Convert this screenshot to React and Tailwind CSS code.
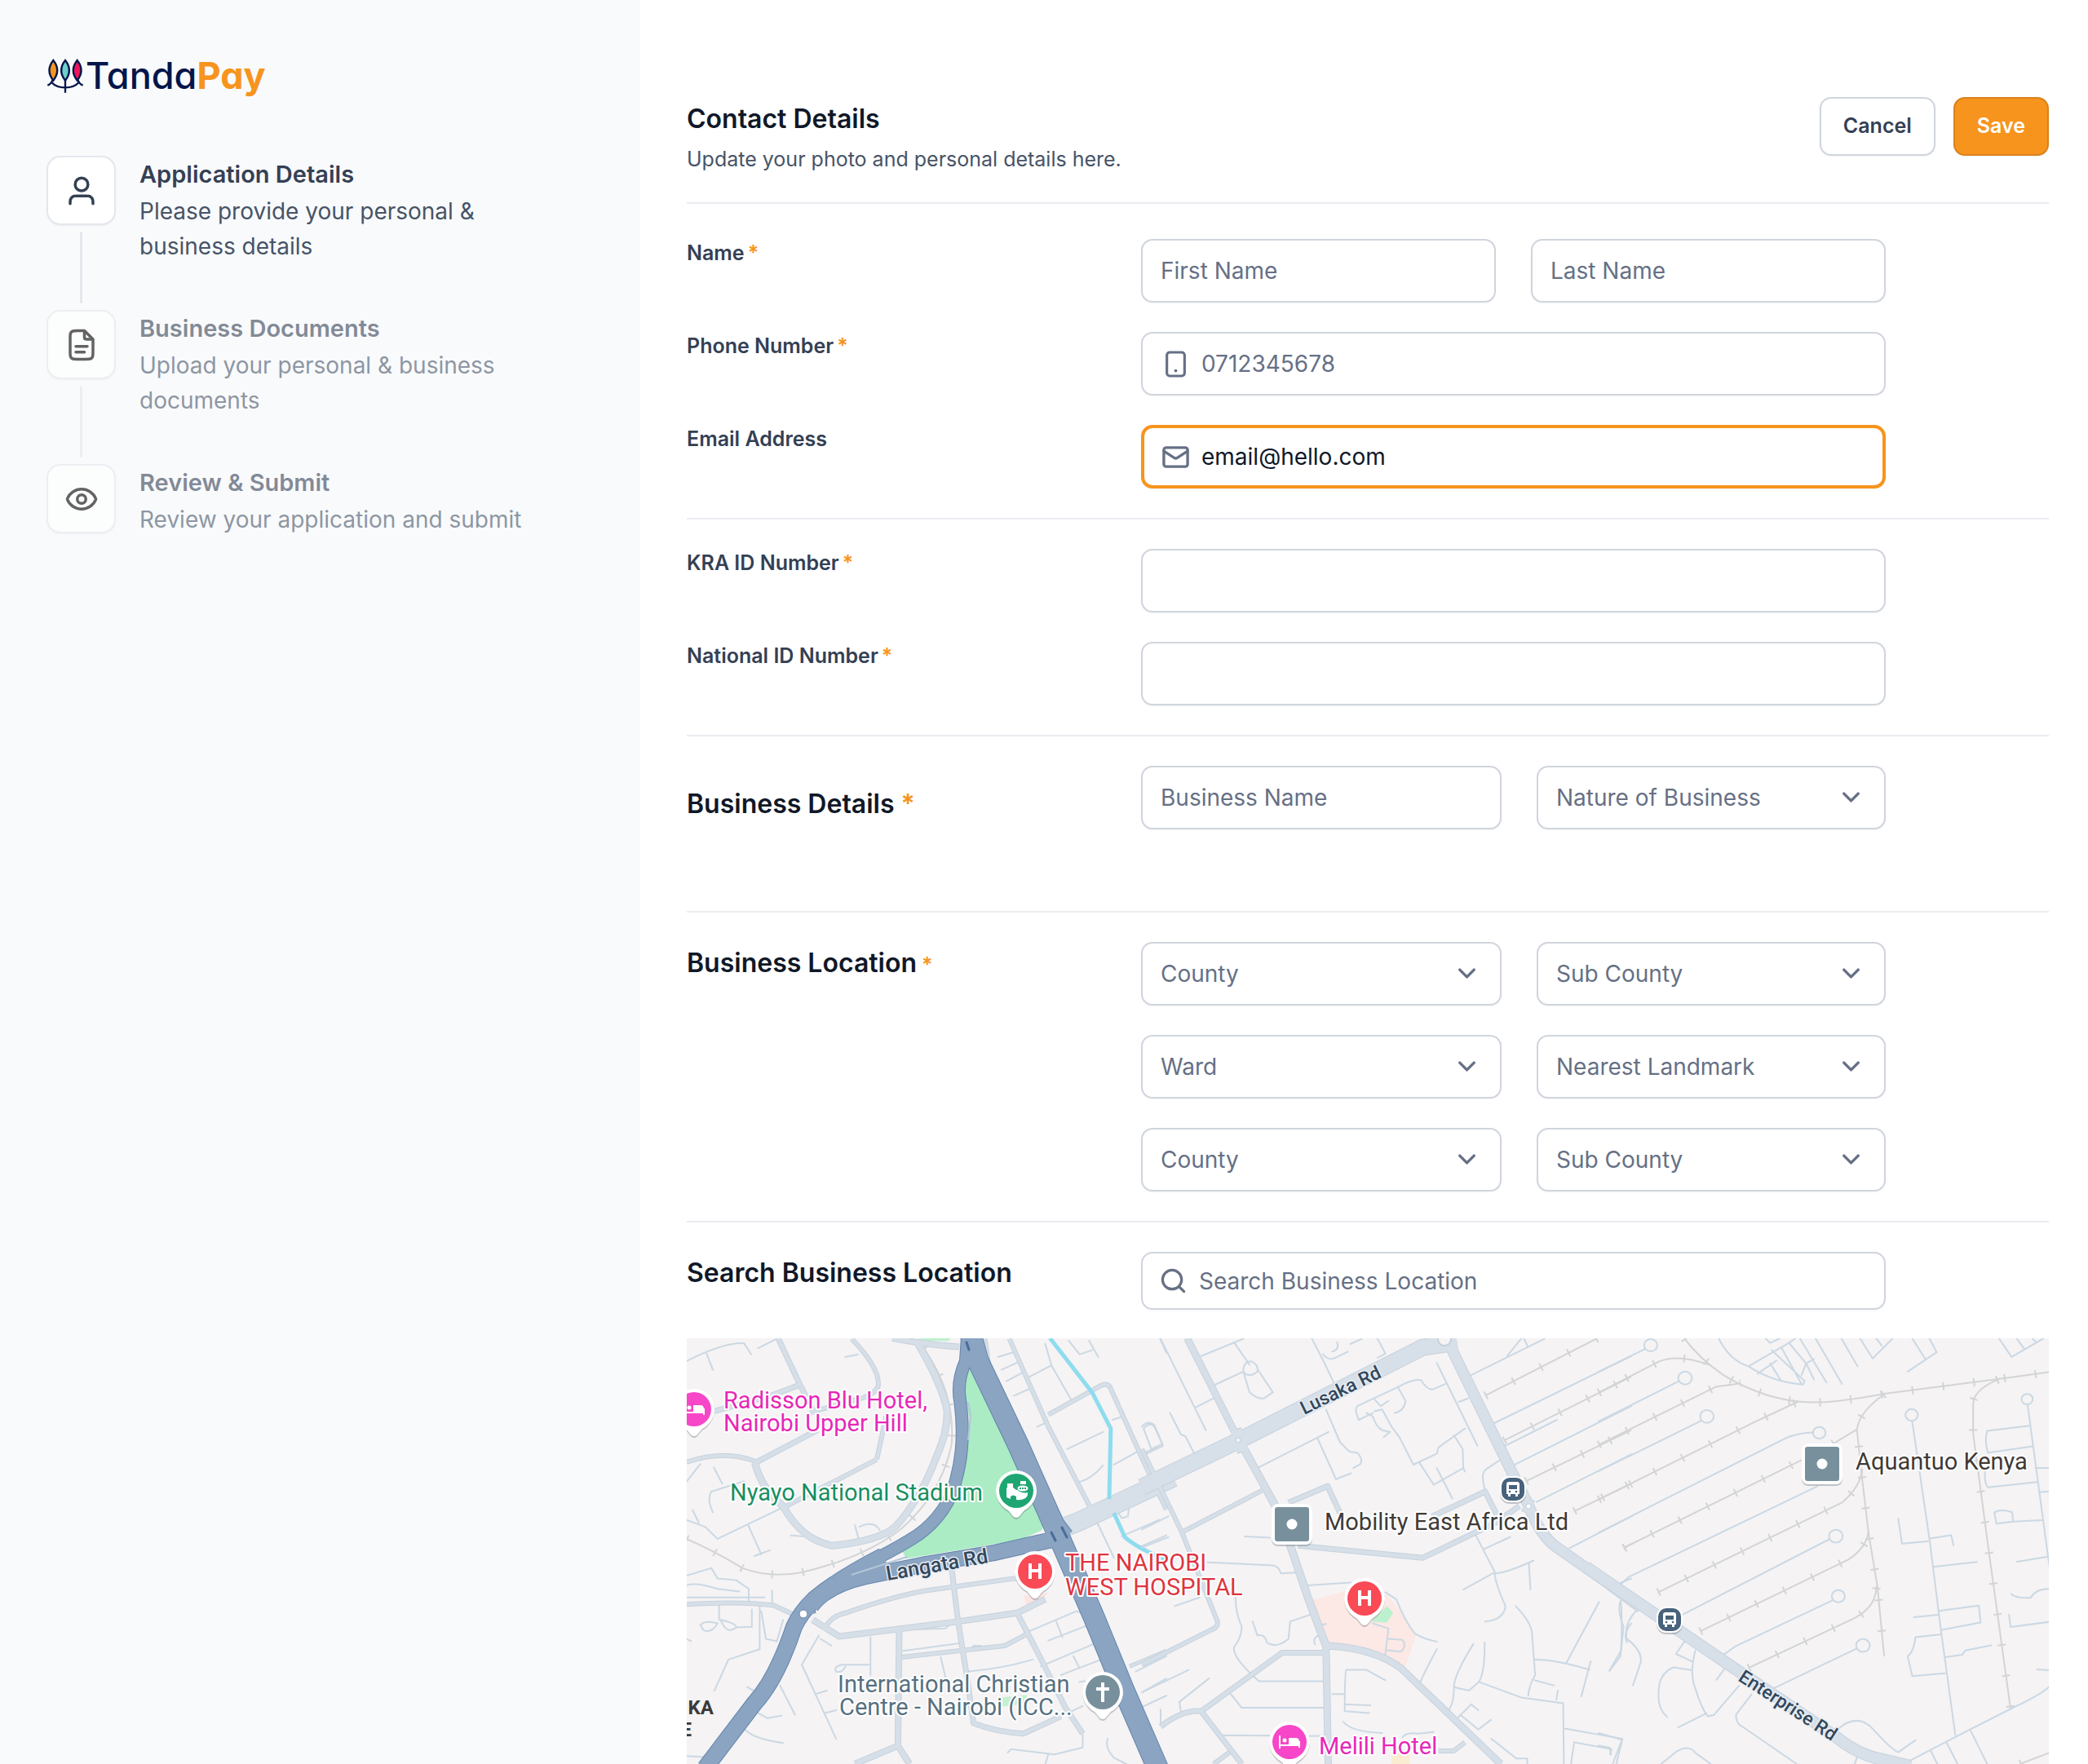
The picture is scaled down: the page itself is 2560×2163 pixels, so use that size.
import React, { useState } from 'react';
import { ChevronDown, Eye, Mail, Search } from 'lucide-react';

const steps = [
  {
    title: 'Application Details',
    text: 'Please provide your personal & business details',
    icon: 'user',
  },
  {
    title: 'Business Documents',
    text: 'Upload your personal & business documents',
    icon: 'file',
  },
  {
    title: 'Review & Submit',
    text: 'Review your application and submit',
    icon: 'eye',
  },
];

const inputClass =
  'h-[78px] w-full min-w-0 rounded-[14px] border-2 border-[#d0d5dd] bg-white px-[22px] text-[28px] text-[#101828] placeholder:text-[#667085] shadow-xs outline-none';

const LogoMark = () => (
  <svg viewBox="50 36 138 126" className="h-[42px] w-[46px]" fill="none" stroke="#02164b" strokeWidth="7">
    <path fill="#f7941d" d="M75 42C56 66 56 92 75 116C94 92 94 66 75 42Z" />
    <path fill="#6fcfce" d="M119 42C100 66 100 92 119 116C138 92 138 66 119 42Z" />
    <path fill="#f0145a" d="M163 42C144 66 144 92 163 116C182 92 182 66 163 42Z" />
    <path d="M54 134Q66 130 72 115M184 134Q172 130 166 115M68 122Q86 142 119 142Q152 142 170 122M119 114V161" />
  </svg>
);

const StepIcon = ({ name }) => {
  if (name === 'eye') return <Eye size={42} strokeWidth={2} />;
  return (
    <svg viewBox="0 0 24 24" className="size-[42px]" fill="none" stroke="currentColor" strokeWidth="2" strokeLinecap="round" strokeLinejoin="round">
      {name === 'user' ? (
        <>
          <circle cx="12" cy="7.5" r="4.5" />
          <path d="M20 21c0-1.4 0-2.1-.17-2.66a4 4 0 0 0-2.67-2.67c-.57-.17-1.26-.17-2.66-.17h-5c-1.4 0-2.1 0-2.66.17a4 4 0 0 0-2.67 2.67C4 18.9 4 19.6 4 21" />
        </>
      ) : (
        <>
          <path d="M14 2.3V6.4c0 .56 0 .84.11 1.05a1 1 0 0 0 .44.44c.21.11.49.11 1.05.11h4.1" />
          <path d="M14 2H8.8c-1.68 0-2.52 0-3.16.33a3 3 0 0 0-1.31 1.31C4 4.28 4 5.12 4 6.8v10.4c0 1.68 0 2.52.33 3.16a3 3 0 0 0 1.31 1.31c.64.33 1.48.33 3.16.33h6.4c1.68 0 2.52 0 3.16-.33a3 3 0 0 0 1.31-1.31c.33-.64.33-1.48.33-3.16V8l-6-6Z" />
          <path d="M16 13H8M14 17H8" />
        </>
      )}
    </svg>
  );
};

const Sidebar = () => (
  <aside className="w-[785px] shrink-0 bg-[#f9fafc] px-[57px] pt-[60px]">
    <div className="flex h-[66px] items-center gap-0.5">
      <LogoMark />
      <span className="text-[45px] font-medium leading-[56px] text-[#02164b] [font-feature-settings:'cv11']">
        Tanda<span className="font-bold text-[#f7941d]">Pay</span>
      </span>
    </div>
    <ol className="mt-[65px]">
      {steps.map((step, index) => (
        <li key={step.title} className={`flex gap-[29px] ${index > 0 ? 'opacity-60' : ''}`}>
          <div className="flex flex-col items-center">
            <div className={`flex size-[85px] items-center justify-center rounded-[17px] border-2 border-[#e4e7ec] bg-white shadow-xs ${index > 0 ? 'text-black' : 'text-[#344054]'}`}>
              <StepIcon name={step.icon} />
            </div>
            {index < steps.length - 1 && (
              <div className="my-2 h-[88px] w-[3px] rounded-sm bg-[#e4e7ec]" />
            )}
          </div>
          <div className="max-w-[490px]">
            <h3 className="text-[29px] font-semibold leading-[45px] text-[#344054]">{step.title}</h3>
            <p className="mt-0.5 text-[28px] leading-[43px] text-[#475467]">{step.text}</p>
          </div>
        </li>
      ))}
    </ol>
  </aside>
);

const Row = ({ label, htmlFor, required, children }) => (
  <div className="flex">
    <div className="w-[557px] shrink-0">
      <label htmlFor={htmlFor} className="text-[25px] font-semibold leading-[35px] text-[#344054]">
        {label}
        {required && <span className="ml-1 text-[#f7941d]">*</span>}
      </label>
    </div>
    <div className="max-w-[913px] flex-1">{children}</div>
  </div>
);

const SelectBox = ({ label }) => (
  <div className="relative">
    <select aria-label={label} className="h-[78px] w-full appearance-none rounded-[14px] border-2 border-[#d0d5dd] bg-white px-[22px] text-[28px] text-[#667085] shadow-xs">
      <option>{label}</option>
    </select>
    <ChevronDown size={35} strokeWidth={2.4} className="pointer-events-none absolute right-[25px] top-[21px] text-[#667085]" />
  </div>
);

/* ---------- map ---------- */

// Each tile keeps its own drawing units, the strokes stay in screen pixels.
const tiles = [
  {
    transform: 'translate(-12 -141) scale(.38265 .42283)',
    areas: [
      ['#abecc4', 'M935 405L1060 640L1175 860L1170 890L1100 918L735 972L718 945L800 890L900 770L932 650L935 560L915 480Z'],
      ['#bdf0ce', 'M775 333H878L870 341H790Z'],
      ['#c4f0d2', 'M1035 1375L1120 1368L1130 1392L1040 1402Z'],
      ['#fce4e1', 'M1112 1080L1190 1070L1165 1095L1118 1108Z'],
    ],
    rails: ['M30 915Q120 950 210 1000Q300 1030 400 1012Q600 970 720 885Q850 780 880 640Q892 500 800 375L775 335'],
    minor: [
      'M30 400Q150 345 215 348L238 380M95 378L115 425M260 362L320 335M540 388L580 380',
      'M75 698L30 750M118 708L145 755M215 748L110 778Q95 800 115 838M50 832L70 868M30 860L90 880L130 915L330 828',
      'M228 875L270 960M248 965L298 948M570 875L585 925M585 880Q630 860 650 890M365 905L410 908',
      'M30 1022L110 1000L130 1030L190 1035L230 1060V1100M30 1085L280 1085M30 1050Q60 1040 130 1060L200 1068M305 1065V1100',
      'M135 1105V1150M75 1165Q90 1150 130 1160Q110 1190 85 1180ZM140 1150Q190 1160 190 1172Q160 1195 140 1150M190 1172L240 1170V1120',
      'M265 1110V1235L165 1265L120 1355M270 1125L285 1205L320 1212L340 1150M225 1345L265 1365',
      'M215 1465Q240 1495 340 1507M250 1415L290 1435L335 1428M330 1340L378 1425M455 1195L400 1280L510 1495M445 1365L480 1355M475 1420L510 1412M460 1205L495 1225',
      'M620 1200V1310M620 1280H530Q500 1285 510 1300Q530 1305 540 1285M760 1178L860 1175L880 1160M725 1240L905 1218M845 1258L860 1315M945 1235L950 1225H975L980 1235',
      'M930 1300Q1050 1290 1140 1265M1110 1190L1280 1125Q1310 1130 1318 1165L1190 1210M1215 1155L1235 1200M1165 1285L1335 1220Q1365 1240 1360 1265L1230 1310M1270 1255L1290 1290M1290 1330L1330 1325',
      'M1060 1535L1070 1525L1210 1540L1300 1520L1300 1480L1240 1400M1230 1430L1300 1400M1380 1495Q1370 1520 1400 1550L1440 1568M1180 1568L1190 1540',
      'M1028 388L1085 372M1040 425L1100 400M1055 458L1110 432M1080 500L1135 478M1130 445L1200 412M1180 350L1200 412L1262 510M1155 590L1190 575',
      'M1250 655L1365 605M1290 750Q1330 740 1365 702M1395 570L1430 560M1400 700L1480 660M1255 340L1290 380L1330 368M1320 340L1350 388M1548 335L1568 375',
      'M1495 595Q1515 575 1530 590L1555 640L1520 655ZM1500 665L1540 648M1410 835L1425 855L1445 850L1448 825M1415 825Q1440 800 1465 800M1345 865L1400 970M1425 908L1545 860M1480 940L1568 905M1490 1360L1568 1320M1470 1300L1568 1255',
      'M1478 1408L1520 1390L1568 1370M30 1205L45 1212M30 1545L90 1548',
    ],
    roads: [
      [6, 'M560 335Q650 420 645 470Q640 490 600 505L440 545M30 693Q150 655 250 690M640 685L670 560M640 685L340 825M440 552L400 475'],
      [7, 'M325 335L395 470L440 552M395 468L300 500L120 545M250 695L450 600'],
      [9, 'M250 695Q270 770 340 820Q400 920 500 935Q650 920 700 880Q780 800 830 680Q870 600 865 540Q850 470 770 345'],
      [8, 'M690 333Q820 355 905 358'],
      [5, 'M988 335L1000 410L1195 800L1240 870'],
      [6, 'M1065 335L1190 590L1325 825M1190 555L1360 470Q1382 462 1390 480L1500 700L1568 830'],
      [6, 'M470 1180Q490 1140 540 1130Q700 1080 800 1065L1080 1030L1150 1040'],
      [8, 'M435 1150L520 1198L900 1155L1090 1130L1180 1090'],
      [7, 'M880 1000L900 1150L930 1320L950 1450Q1020 1475 1110 1480L1230 1430M1090 1130L1170 1270L1245 1405L1300 1480'],
      [8, 'M712 1180L708 1515L745 1568M708 1515L570 1568'],
      [6, 'M720 1258L1050 1225L1125 1190M30 1105Q200 1095 310 1108L375 1135'],
      [5, 'M1450 1285L1568 1240'],
    ],
    majors: [[24, 'M1230 885L1280 868L1590 737']],
    water: ['M1195 333L1330 490L1390 595L1385 800M1400 840L1435 910Q1480 945 1568 975'],
    highways: [
      [16, 'M930 335L925 400Q895 460 908 520Q925 640 895 740Q870 840 770 905Q720 935 640 972'],
      [21, 'M660 965Q520 1030 440 1090Q395 1130 375 1170Q320 1320 250 1390L90 1580'],
      [20, 'M430 1110Q480 1050 600 1025L800 988L1020 955L1215 915'],
      [27, 'M942 325L965 400L1092 640L1215 890L1335 1140L1430 1350L1545 1590'],
      [31, 'M1205 880L1235 915'],
      [30, 'M403 1125L408 1140'],
    ],
  },
  {
    transform: 'translate(558 -141) scale(.38265 .42283)',
    areas: [
      ['#fce8e4', 'M548 1092L660 1065L790 1080L840 1140L878 1195L842 1295L790 1265Q740 1230 600 1215Z'],
      ['#bdf0ce', 'M735 1155L785 1110L805 1130L785 1158Z'],
      ['#faecd0', 'M800 1535H858V1568H800Z'],
    ],
    rails: [
      'M1100 500L1460 333', 'M1160 630L1568 445', 'M1230 748L1568 600', 'M1385 835L1568 755', 'M1545 942L1568 930',
    ],
    minor: [
      'M60 335L205 600M170 535L228 508M190 385L325 335M295 345L345 410M230 470L325 430M325 430Q325 400 350 400Q375 410 370 430Q345 450 325 430L345 490Q370 510 390 508L420 490L372 425',
      'M0 590Q20 570 40 585L68 645L15 668M90 550L125 612L140 618L170 672M370 710L598 605M562 622L622 742M622 742L670 725',
      'M545 335L585 405L615 462M580 380Q600 400 620 390L660 372M625 345Q635 365 610 372M668 350L705 335M755 335L780 378L755 390M590 540L635 635L665 662L690 665Q710 685 700 698L678 710',
      'M690 530L820 475Q870 450 895 455Q910 480 930 482L975 465M690 530Q680 540 695 570L740 550M745 510L765 530L790 515M720 550L740 560Q750 590 770 600L795 605L775 620M745 545L770 540L800 590L825 620L870 700L945 668L950 650L1035 595',
      'M945 405L1040 580L1075 645M820 475L845 515Q840 545 810 550M1015 518L1045 508M890 695L935 758L1030 710L1028 655L1000 615M945 710L995 798M1030 710L1035 720',
      'M1145 688L1100 715Q1085 730 1100 775M0 888L85 850M0 940L85 910M330 908L410 912M210 983L420 992Q440 995 445 1015L495 1013M105 1110L185 1085M530 1050L670 1042',
      'M300 1085Q300 1130 320 1170Q320 1200 295 1230Q290 1260 375 1328H590M285 1365L320 1405H590M0 1360L150 1295M215 1320L120 1388L125 1415M60 1410V1450',
      'M355 1155L370 1195Q395 1190 400 1215Q430 1235 470 1205L475 1155L540 1135M555 1222Q545 1200 570 1195M575 1165L590 1162M240 1485L590 1487',
      'M740 1160L790 1175L780 1250M790 1205L835 1208Q850 1225 830 1242L785 1238M780 1070L815 1090Q840 1150 875 1190Q900 1205 945 1213M945 1235Q900 1310 888 1340M610 1365H650M780 1325L720 1295H655Q650 1300 650 1415L728 1420M650 1395L732 1398',
      'M645 1445Q670 1475 770 1478M835 1490Q850 1475 885 1480L935 1475M1120 1495L1200 1552H1235V1568M1375 1568L1385 1505L1505 1525L1500 1540M1355 1465L1540 1495L1520 1568',
      'M1070 905L1130 1010Q1130 1040 1165 1110Q1160 1150 1100 1155M1095 945L1180 910M1030 1062L1125 1015Q1160 1018 1255 978M1240 985L1245 1062',
      'M1198 1110Q1250 1160 1250 1190L1260 1310Q1240 1340 1238 1370M1260 1265Q1330 1265 1435 1295M1438 1270L1408 1372M1465 1098L1360 1275M1258 1325L1320 1340M1333 1355L1328 1382',
      'M1098 1215Q1100 1300 1080 1330L1215 1375L1350 1392L1352 1568M1062 1220Q1000 1310 1000 1345L1048 1355L1080 1330M1000 1345Q1000 1400 975 1420M1000 1445L1055 1395L1078 1412M1020 1425L1078 1468L1118 1440',
      'M1535 1100Q1540 1160 1535 1240L1498 1297M1568 1160Q1540 1190 1555 1215M1535 1042L1568 1030',
      'M1055 440L1290 335M1170 385L1215 335M1225 335L1235 355M1128 580L1568 385M1165 645L1330 570M1195 700L1568 530M1265 808L1568 670M1370 942L1568 850',
    ],
    roads: [
      [9, 'M145 333L300 610'],
      [6, 'M0 655L130 900L240 1150Q250 1170 220 1180L0 1280M130 895L385 775'],
      [10, 'M325 650L440 840L530 1080L590 1225'],
      [9, 'M590 1225L597 1568M590 1225Q740 1230 830 1290L1150 1568'],
      [7, 'M500 935L900 970L1130 870L1210 820M470 810L595 762L640 850M930 850L1100 778L1140 850'],
      [7, 'M60 1460Q130 1410 190 1415L320 1568M190 1415L450 1245H590'],
      [6, 'M950 1530H1000L1035 1505M230 1568L280 1535'],
    ],
    majors: [
      [21, 'M0 765L310 630L900 360L1010 345'],
      [30, 'M295 635L330 625'],
      [14, 'M990 360L1190 730L1240 820Q1275 905 1330 940L1480 1035L1600 1115'],
      [18, 'M1225 815L1250 825'],
    ],
    water: [],
    highways: [],
  },
  {
    transform: 'translate(1118 -41) scale(.38265 .35906)',
    areas: [],
    rails: [
      'M0 300L190 195Q250 165 355 205', 'M0 478L375 280L455 268', 'M0 665L500 400L640 330',
      'M80 830L650 530M750 475L828 425', 'M190 982L780 675Q840 620 845 560',
      'M325 1115L800 870Q860 830 865 770', 'M480 1240L820 1070Q890 1030 890 960',
      'M275 115Q320 180 400 240Q540 330 680 333Q760 335 920 303L1270 255L1443 230',
      'M915 305Q830 370 828 430L845 600L865 780L893 960L915 1200', 'M1280 255Q1200 290 1200 340V440L1250 840L1320 1380',
      'M1350 1568L1443 1530',
    ],
    minor: [
      'M0 228L150 150M0 398L258 260M0 568L330 395M0 778L600 455Q640 437 688 436M70 955L95 930L700 620M265 1060L740 800M400 1195L440 1165L752 1008M560 1310L830 1172',
      'M385 115Q420 190 480 210Q560 265 655 272L660 260L555 155M480 210L610 130L630 115M510 235L570 190M550 200L585 260M585 145L650 270M610 130L665 200L650 240M645 115L730 265M695 115L780 270M665 200L690 185M665 200L690 255M535 115L550 130L580 115',
      'M778 115L830 210M838 115L878 183L942 115M890 115L908 140M1005 115L1048 187L990 228M1048 187L1083 162L1060 115M1283 115L1323 178L1425 115M1340 115L1365 152M1390 115L1402 128',
      'M1005 400L1060 800L1098 1120L1143 1470M1375 345L1440 860L1448 920M960 730L972 815L1055 808M1060 798L1130 787L1137 822M1072 895L1212 878M1010 1067L1090 1058M1090 1045L1218 1027L1224 1085L1100 1110M1098 1125L1015 1135Q1010 1185 990 1200L1005 1268L1110 1258M1112 1203L1165 1195L1175 1180L1258 1163',
      'M1380 413L1245 430Q1235 470 1248 505L1390 483M1238 570Q1235 610 1248 623L1405 605M1268 710Q1285 695 1325 708L1328 740L1275 747ZM1328 740L1422 735M1400 557H1443M1412 640L1443 637M1340 877L1440 860M1322 987Q1335 1003 1385 1000Q1400 970 1443 970M1315 1058L1320 1100L1443 1083M1405 1245L1443 1248',
      'M1000 1555L1190 1450L1320 1380Q1420 1330 1443 1305M1063 1520L1085 1568M1115 1495L1150 1568M1190 1450L1245 1568',
      'M75 1005Q55 1030 80 1100L70 1200L35 1250M120 1045Q80 1090 90 1140Q140 1180 135 1220L110 1300M275 1150L248 1192L300 1218M310 1180Q290 1260 310 1310Q330 1380 350 1405L370 1400L450 1300M300 1248L240 1238Q190 1260 192 1330Q190 1380 220 1408M255 1443L345 1395',
      'M405 1240L378 1280M490 1330L440 1400Q440 1430 460 1440L635 1568M0 1462L75 1485L45 1568M0 1505L35 1512L40 1535M200 1568L250 1525Q290 1500 310 1530L360 1568M765 1450Q830 1390 880 1450Q940 1520 960 1528L1015 1487M830 1540L820 1568',
    ],
    circles: [
      [167, 138, 21], [277, 250, 22], [347, 381, 22], [707, 437, 20], [1003, 376, 20], [1373, 322, 18], [760, 790, 22], [768, 995, 21], [847, 1163, 22],
    ],
    roads: [],
    majors: [[15, 'M-40 895L0 925L440 1245L760 1475Q830 1535 900 1550L1000 1575']],
    water: [],
    highways: [],
  },
];

const Tile = ({ tile }) => (
  <g transform={tile.transform} fill="none" strokeLinejoin="round">
    {tile.areas.map(([fill, d]) => <path key={d} d={d} fill={fill} />)}
    {tile.rails.map((d) => (
      <g key={d} stroke="#d3d4d6">
        <path d={d} strokeWidth="2" vectorEffect="non-scaling-stroke" />
        <path d={d} strokeWidth="10" strokeDasharray="2 36" vectorEffect="non-scaling-stroke" />
      </g>
    ))}
    <g stroke="#cbd8e3" strokeWidth="2" strokeLinecap="round">
      {tile.minor.map((d) => <path key={d} d={d} vectorEffect="non-scaling-stroke" />)}
      {(tile.circles || []).map(([cx, cy, r]) => (
        <circle key={cx} cx={cx} cy={cy} r={r} fill="#f5f3f4" vectorEffect="non-scaling-stroke" />
      ))}
    </g>
    {tile.roads.map(([w, d]) => <path key={d} d={d} stroke="#c6d2de" strokeWidth={w} vectorEffect="non-scaling-stroke" />)}
    {tile.majors.map(([w, d]) => <path key={d} d={d} stroke="#c6d2de" strokeWidth={w} vectorEffect="non-scaling-stroke" />)}
    {tile.roads.map(([w, d]) => <path key={d} d={d} stroke="#d6dfe7" strokeWidth={w - 2} vectorEffect="non-scaling-stroke" />)}
    {tile.majors.map(([w, d]) => <path key={d} d={d} stroke="#d7dfe8" strokeWidth={w - 2} vectorEffect="non-scaling-stroke" />)}
    {tile.water.map((d) => <path key={d} d={d} stroke="#8edcef" strokeWidth="5" vectorEffect="non-scaling-stroke" />)}
    {tile.highways.map(([w, d]) => <path key={d} d={d} stroke="#6485ae" strokeWidth={w} vectorEffect="non-scaling-stroke" />)}
    {tile.highways.map(([w, d]) => <path key={d} d={d} stroke="#8aa4c1" strokeWidth={w - 2} vectorEffect="non-scaling-stroke" />)}
  </g>
);

const Pin = ({ x, y, color, children }) => (
  <g transform={`translate(${x} ${y})`}>
    <path d="M0 35C-4 35-6 30-10 26C-19 21-25 11-25 1A25 25 0 0 1 25 1C25 11 19 21 10 26C6 30 4 35 0 35Z" fill="#5b6470" opacity=".35" />
    <path d="M0 33C-4 33-6 28-10 24C-19 19-25 10-25 0A25 25 0 0 1 25 0C25 10 19 19 10 24C6 28 4 33 0 33Z" fill="#fff" />
    <circle r="21" fill={color} />
    {children}
  </g>
);

const Bed = () => (
  <g fill="none" stroke="#fff" strokeWidth="2">
    <path d="M-12-8V8M-12 4H12M12 7V-1" />
    <circle cx="-6" cy="-2" r="2.5" fill="#fff" stroke="none" />
    <path d="M-1-5H8Q12-5 12 0V3H-1Z" fill="#fff" stroke="none" />
  </g>
);

const Hospital = () => <path d="M-6-10V9M6-10V9M-6-1H6" stroke="#fff" strokeWidth="4" />;

const Place = ({ x, y }) => (
  <g transform={`translate(${x} ${y})`}>
    <rect x="-25" y="-23" width="50" height="50" rx="8" fill="#5b6470" opacity=".35" />
    <rect x="-25" y="-25" width="50" height="50" rx="8" fill="#fff" />
    <rect x="-21" y="-21" width="42" height="42" rx="3" fill="#78909c" />
    <circle r="6.5" fill="#fff" />
  </g>
);

const BusStop = ({ x, y }) => (
  <g transform={`translate(${x} ${y})`}>
    <rect x="-16" y="-14" width="32" height="32" rx="12" fill="#5b6470" opacity=".35" />
    <rect x="-16" y="-16" width="32" height="32" rx="12" fill="#fff" />
    <rect x="-14" y="-14" width="28" height="28" rx="10" fill="#48627c" />
    <path d="M-8 6V-6Q-8-9-5-9H5Q8-9 8-6V6H6V9H3V6H-3V9H-6V6Z" fill="#fff" />
    <path d="M-5-5H5V0H-5Z" fill="#48627c" />
    <circle cx="-4" cy="3" r="1.3" fill="#48627c" />
    <circle cx="4" cy="3" r="1.3" fill="#48627c" />
  </g>
);

const placeNames = [
  { x: 45, y: 86, color: '#e628b8', text: 'Radisson Blu Hotel,' },
  { x: 45, y: 114, color: '#e628b8', text: 'Nairobi Upper Hill' },
  { x: 53, y: 199, color: '#188f61', text: 'Nyayo National Stadium' },
  { x: 464, y: 285, color: '#de3440', text: 'THE NAIROBI' },
  { x: 464, y: 315, color: '#de3440', text: 'WEST HOSPITAL' },
  { x: 185, y: 434, color: '#56707f', text: 'International Christian' },
  { x: 187, y: 462, color: '#56707f', text: 'Centre - Nairobi (ICC...' },
  { x: 782, y: 235, color: '#3f3a36', text: 'Mobility East Africa Ltd' },
  { x: 1433, y: 161, color: '#3f3a36', text: 'Aquantuo Kenya' },
  { x: 775, y: 510, color: '#e628b8', text: 'Melili Hotel' },
];

const LocationMap = () => (
  <svg viewBox="0 0 1670 522" role="img" aria-label="Map of Nairobi" className="block h-auto w-full bg-[#f5f3f4] font-['Roboto',sans-serif]">
    {tiles.map((tile) => <Tile key={tile.transform} tile={tile} />)}

    <circle cx="143" cy="338" r="5" fill="#fff" stroke="#6485ae" strokeWidth="1" />
    <circle cx="676" cy="125" r="3" fill="#eef1f4" stroke="#c3d0dd" />
    <circle cx="1032" cy="206" r="3" fill="#fff" stroke="#c3d0dd" />
    <circle cx="929" cy="1" r="8" fill="#f5f3f4" stroke="#c3d0dd" strokeWidth="2" />
    <path d="M447 238L452 248M460 232L466 244M343 5L346 14" stroke="#4a6c9b" strokeWidth="3" strokeLinecap="round" />
    <path d="M202 290L270 268M345 78L348 95L345 125" stroke="#b4c6d8" strokeWidth="2" fill="none" />

    <g fontSize="29" stroke="#fff" strokeWidth="4" strokeLinejoin="round" paintOrder="stroke">
      {placeNames.map((p) => (
        <text key={p.text} x={p.x} y={p.y} fill={p.color}>{p.text}</text>
      ))}
    </g>
    <g fontSize="23" fontWeight="500" fill="#33475c" stroke="#e9eef3" strokeWidth="3" strokeLinejoin="round" paintOrder="stroke">
      <text transform="translate(246 297) rotate(-10)" fontSize="25">Langata Rd</text>
      <text transform="translate(757 94) rotate(-26)">Lusaka Rd</text>
      <text transform="translate(1288 419) rotate(33)">Enterprise Rd</text>
    </g>
    <g fontSize="24" fontWeight="700" fill="#3a3a3a" textAnchor="end">
      <text x="33" y="461">KA</text>
      <text x="6" y="488">E</text>
    </g>

    <Pin x={9} y={87} color="#f846c8"><Bed /></Pin>
    <Pin x={404} y={187} color="#1ea672">
      <path d="M-11-9H-4V-4L0-1H3Q7 4 14 2V5Q12 12 0 11V7Q-4 4-7 7V10L-12 8V-3L-11-4Z" fill="#fff" />
      <path d="M5-12H12V-8H5Z" fill="#fff" />
      <ellipse cx="8" cy="-3" rx="7" ry="4" fill="#fff" stroke="#1ea672" />
      <path d="M4-3H12" stroke="#1ea672" strokeWidth="2" strokeDasharray="2 1" />
    </Pin>
    <Pin x={427} y={286} color="#f94a56"><Hospital /></Pin>
    <Pin x={510} y={434} color="#78909c">
      <path d="M0-12V12M-8-4H8" stroke="#fff" strokeWidth="4" />
    </Pin>
    <Pin x={831} y={319} color="#f94a56"><Hospital /></Pin>
    <Pin x={739} y={495} color="#f846c8"><Bed /></Pin>
    <Place x={742} y={228} />
    <Place x={1392} y={154} />
    <BusStop x={1013} y={185} />
    <BusStop x={1205} y={345} />
  </svg>
);

export default function App() {
  const [email, setEmail] = useState('email@hello.com');

  return (
    <div className="flex min-h-screen bg-white font-['Inter',sans-serif]">
      <Sidebar />
      <main className="min-w-0 flex-1 pl-[57px] pr-12 pt-[119px]">
        <header className="flex items-start justify-between pb-[35px]">
          <div>
            <h1 className="text-[32px] font-semibold leading-[54px] text-[#101828]">Contact Details</h1>
            <p className="mt-1 text-[25px] leading-[36px] text-[#475467]">Update your photo and personal details here.</p>
          </div>
          <div className="flex gap-[22px]">
            <button className="h-[72px] rounded-[14px] border-2 border-[#d0d5dd] bg-white px-[27px] text-[25px] font-semibold text-[#344054] shadow-xs">
              Cancel
            </button>
            <button className="h-[72px] rounded-[14px] border-2 border-[#d9821c] bg-[#f7941d] px-[27px] text-[25px] font-semibold text-white shadow-xs">
              Save
            </button>
          </div>
        </header>

        <section className="flex flex-col gap-9 border-t-2 border-[#eaecf0] pb-9 pt-[43px]">
          <Row label="Name" htmlFor="first-name" required>
            <div className="grid grid-cols-2 gap-[43px]">
              <input id="first-name" placeholder="First Name" className={inputClass} />
              <input aria-label="Last Name" placeholder="Last Name" className={inputClass} />
            </div>
          </Row>
          <Row label="Phone Number" htmlFor="phone" required>
            <div className="flex h-[78px] items-center gap-3.5 rounded-[14px] border-2 border-[#d0d5dd] px-[23px] shadow-xs">
              <svg viewBox="0 0 20 20" className="size-[35px] shrink-0 text-[#667085]" fill="none" stroke="currentColor" strokeWidth="1.8" strokeLinecap="round" strokeLinejoin="round">
                <rect x="3.8" y="1.7" width="12.4" height="16.6" rx="2" />
                <path d="M10 14.6h.01" strokeWidth="2.2" />
              </svg>
              <input id="phone" placeholder="0712345678" className="w-full min-w-0 bg-transparent text-[28px] placeholder:text-[#667085] outline-none" />
            </div>
          </Row>
          <Row label="Email Address" htmlFor="email">
            <div className="flex h-[78px] items-center gap-3.5 rounded-[14px] border-4 border-[#f7941d] px-[21px] shadow-xs">
              <Mail size={35} strokeWidth={2.3} className="shrink-0 text-[#667085]" />
              <input
                id="email"
                value={email}
                onChange={(e) => setEmail(e.target.value)}
                className="w-full min-w-0 bg-transparent text-[28px] text-[#101828] outline-none"
              />
            </div>
          </Row>
        </section>

        <section className="flex flex-col gap-9 border-t-2 border-[#eaecf0] py-9">
          <Row label="KRA ID Number" htmlFor="kra" required>
            <input id="kra" className={`block ${inputClass}`} />
          </Row>
          <Row label="National ID Number" htmlFor="national-id" required>
            <input id="national-id" className={`block ${inputClass}`} />
          </Row>
        </section>

        <section className="flex border-t-2 border-[#eaecf0] pb-[100px] pt-9">
          <h2 className="w-[557px] shrink-0 pt-[21px] text-[32px] font-semibold leading-[52px] text-[#101828]">
            Business Details <span className="text-[#f7941d]">*</span>
          </h2>
          <div className="grid max-w-[913px] flex-1 grid-cols-[442fr_428fr] gap-[43px]">
            <input aria-label="Business Name" placeholder="Business Name" className={inputClass} />
            <SelectBox label="Nature of Business" />
          </div>
        </section>

        <section className="flex border-t-2 border-[#eaecf0] py-9">
          <h2 className="w-[557px] shrink-0 text-[32px] font-semibold leading-[52px] text-[#101828]">
            Business Location<span className="pl-1.5 align-middle text-[25px] leading-none text-[#f7941d]">*</span>
          </h2>
          <div className="grid max-w-[913px] flex-1 grid-cols-[442fr_428fr] gap-x-[43px] gap-y-9">
            <SelectBox label="County" />
            <SelectBox label="Sub County" />
            <SelectBox label="Ward" />
            <SelectBox label="Nearest Landmark" />
            <SelectBox label="County" />
            <SelectBox label="Sub County" />
          </div>
        </section>

        <section className="flex border-t-2 border-[#eaecf0] pb-[35px] pt-9">
          <h2 className="w-[557px] shrink-0 text-[32px] font-semibold leading-[52px] text-[#101828]">
            <label htmlFor="search">Search Business Location</label>
          </h2>
          <div className="flex h-[71px] max-w-[913px] flex-1 items-center gap-3.5 rounded-[14px] border-2 border-[#d0d5dd] px-5 shadow-xs">
            <Search size={35} strokeWidth={2.2} className="shrink-0 text-[#667085]" />
            <input id="search" placeholder="Search Business Location" className="w-full min-w-0 bg-transparent text-[28px] placeholder:text-[#667085] outline-none" />
          </div>
        </section>

        <LocationMap />
      </main>
    </div>
  );
}
